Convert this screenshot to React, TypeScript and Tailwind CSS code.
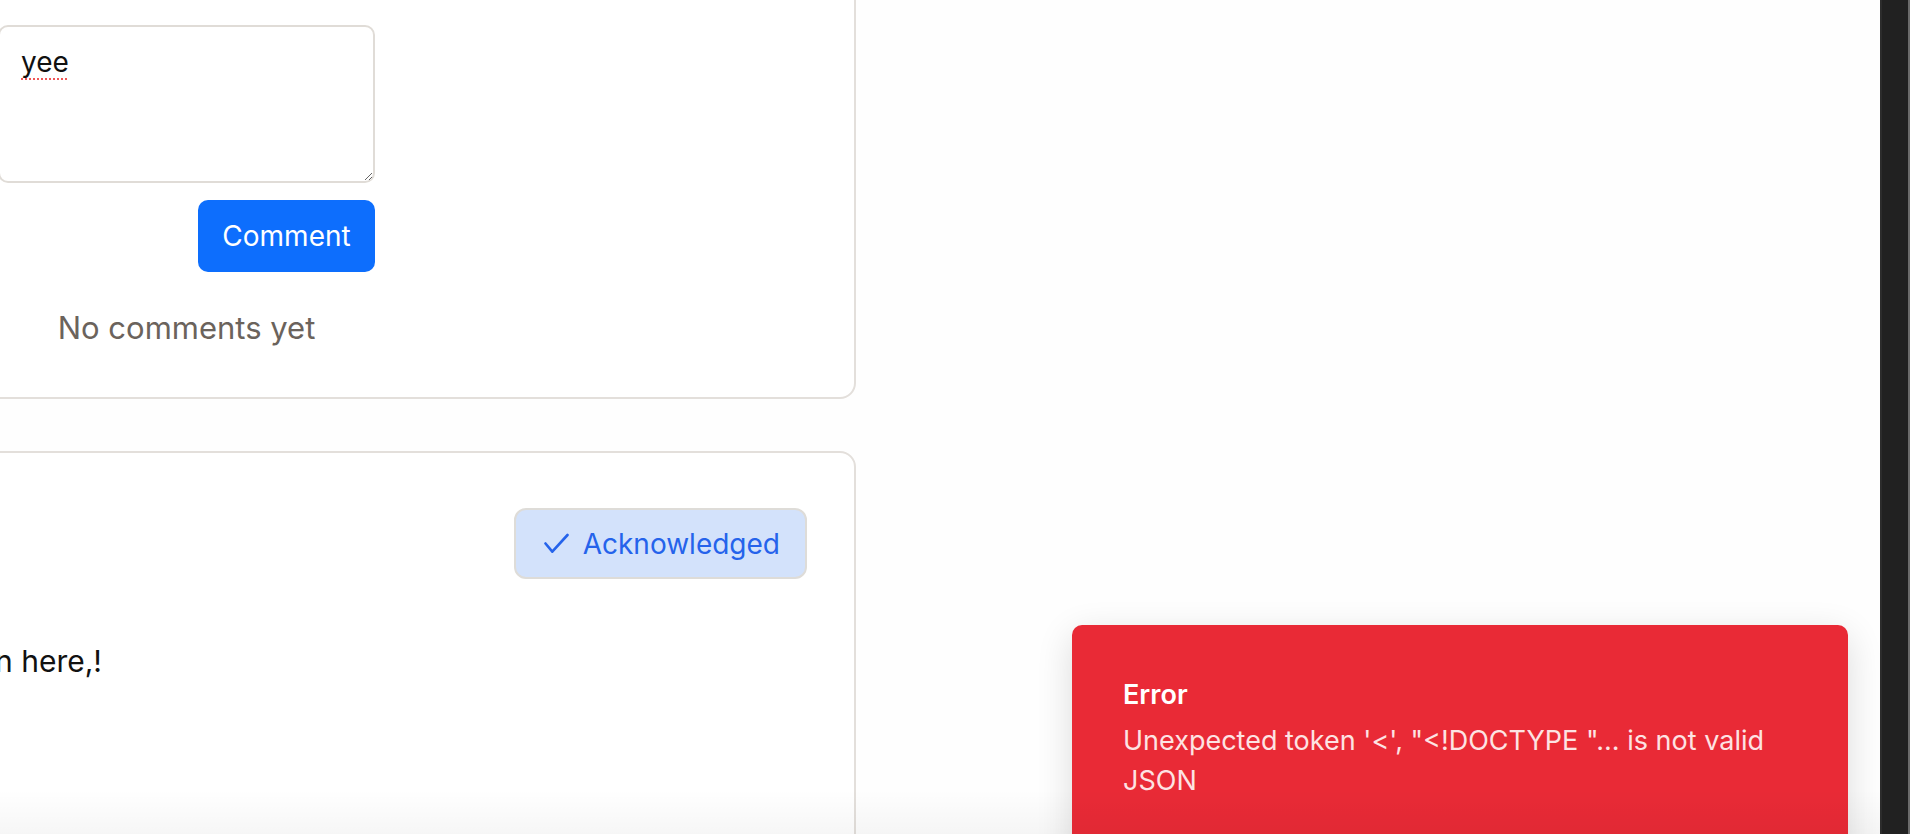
import React from 'react';

const CheckIcon = () => (
  <svg width="26" height="21" viewBox="0 0 26 21" fill="none" stroke="currentColor" strokeWidth="2.6" strokeLinecap="round" strokeLinejoin="round">
    <polyline points="2.5,10.5 9.3,18.7 24.5,2" />
  </svg>
);

export default function App() {
  return (
    <div className="flex h-[834px] w-full overflow-hidden bg-[#fefefe] font-['Inter',sans-serif] text-[#151515]">
      <main className="relative flex-1 overflow-hidden">
        <div className="ml-[-400px] mt-[-100px] flex w-[1256px] flex-col">
          {/* post card with comments */}
          <section className="rounded-[16px] border-2 border-[#e3dfdb] bg-white p-[47px]">
            <div className="flex">
              <div className="w-[349px] shrink-0" />
              <div className="mt-[76px] flex w-[377px] flex-col">
                <textarea
                  defaultValue="yee"
                  spellCheck={false}
                  className="h-[158px] w-full rounded-[10px] border-2 border-[#e0dcd7] bg-white px-[21px] py-[14px] text-[28px] leading-[42px] text-[#111] underline decoration-[#f05656] decoration-dotted decoration-2 underline-offset-[6px] outline-none"
                />
                <button className="mt-[17px] h-[72px] w-[177px] self-end rounded-[10px] bg-[#0d6efd] text-[28px] text-white">
                  Comment
                </button>
                <p className="mt-[33px] text-center text-[31px] leading-[45px] text-[#6b635c]">No comments yet</p>
              </div>
            </div>
          </section>

          {/* next post card */}
          <section className="mt-[52px] h-[500px] rounded-[16px] border-2 border-[#e3dfdb] bg-white p-[47px]">
            <div className="flex justify-end">
              <span className="mt-[8px] flex h-[71px] items-center gap-[14px] rounded-[12px] border-2 border-[#dedcd8] bg-[#d3e2fb] pl-[27px] pr-[25px] text-[28px] text-[#2563eb]">
                <CheckIcon />
                Acknowledged
              </span>
            </div>
            <p className="mt-[60px] w-[453px] whitespace-nowrap text-right text-[30px] leading-[45px] text-[#111]">
              Posting an update written here,!
            </p>
          </section>
        </div>

        {/* error toast */}
        <div className="absolute right-[32px] top-[625px] h-[240px] w-[776px] rounded-[10px] bg-[#e92a36] px-[51px] pt-[51px] shadow-[0_10px_36px_rgba(0,0,0,0.14)]">
          <p className="text-[27px] font-semibold leading-[37px] text-white">Error</p>
          <p className="mt-[8px] text-[27px] leading-[40px] text-[#fde3e3]">
            Unexpected token '&lt;', "&lt;!DOCTYPE "... is not valid JSON
          </p>
        </div>

        <div className="pointer-events-none absolute inset-x-0 bottom-0 h-[45px] bg-linear-to-b from-transparent to-black/[0.035]" />
      </main>
      <div className="w-[30px] shrink-0 border-l-2 border-r-2 border-l-[#2c2c2c] border-r-[#6b6b6b] bg-[#212121]" />
    </div>
  );
}
